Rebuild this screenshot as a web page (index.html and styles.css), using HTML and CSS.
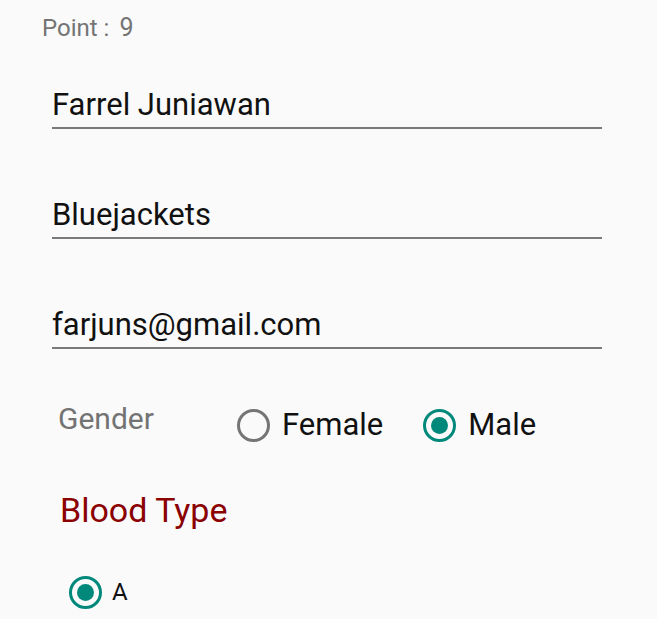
FILE: index.html
```html
<!DOCTYPE html>
<html>
<head>
<meta charset="utf-8">
<link rel="stylesheet" href="styles.css">
</head>
<body>
<div class="screen">
  <div class="point">Point :<span class="point-value">9</span></div>
  <div class="field">Farrel Juniawan</div>
  <div class="field">Bluejackets</div>
  <div class="field">farjuns@gmail.com</div>
  <div class="gender-row">
    <div class="gender-label">Gender</div>
    <div class="radio-group">
      <div class="radio"><span class="circle"></span><span class="radio-text">Female</span></div>
      <div class="radio"><span class="circle checked"></span><span class="radio-text">Male</span></div>
    </div>
  </div>
  <div class="blood-title">Blood Type</div>
  <div class="radio small"><span class="circle checked"></span><span class="radio-text">A</span></div>
</div>
</body>
</html>
```
FILE: styles.css
```css
html, body {
  margin: 0;
  padding: 0;
  background: #fafafa;
}
.screen {
  font-family: Roboto, "Liberation Sans", sans-serif;
  padding: 14px 55px 0 42px;
  height: 619px;
  box-sizing: border-box;
  overflow: hidden;
}
.point {
  font-size: 24px;
  color: #747474;
  line-height: 28px;
}
.point-value {
  margin-left: 10px;
  font-size: 25px;
}
.field {
  margin: 45px 0 0 10px;
  font-size: 31px;
  color: #111;
  line-height: 36px;
  padding-bottom: 4px;
  border-bottom: 2px solid #7a7a7a;
}
.field + .field {
  margin-top: 68px;
}
.gender-row {
  display: flex;
  align-items: flex-start;
  margin: 52px 0 0 16px;
}
.gender-label {
  font-size: 30px;
  color: #737373;
  width: 179px;
  line-height: 36px;
}
.radio-group {
  display: flex;
  gap: 40px;
  margin-top: 6px;
}
.radio {
  display: flex;
  align-items: center;
  gap: 12px;
}
.circle {
  width: 27px;
  height: 27px;
  border: 3.5px solid #757575;
  border-radius: 50%;
  box-sizing: content-box;
  position: relative;
  flex: none;
}
.circle.checked {
  border-color: #00897b;
}
.circle.checked::after {
  content: "";
  position: absolute;
  left: 5px;
  top: 5px;
  width: 17px;
  height: 17px;
  border-radius: 50%;
  background: #00897b;
}
.radio-text {
  font-size: 31px;
  color: #111;
  line-height: 36px;
}
.blood-title {
  margin: 47px 0 0 18px;
  font-size: 34px;
  color: #8b0000;
  line-height: 40px;
}
.small {
  margin: 44px 0 0 27px;
  gap: 10px;
}
.small .radio-text {
  font-size: 24px;
}
```
